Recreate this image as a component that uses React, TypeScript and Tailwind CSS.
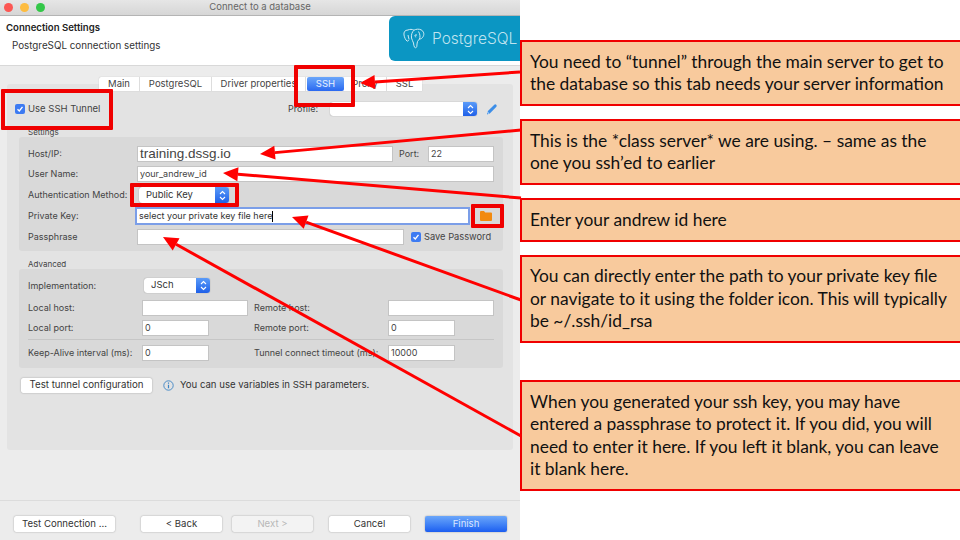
import { ReactNode } from 'react';

const ui = "font-['Inter','Liberation_Sans',sans-serif]";

function Stepper() {
    return (
        <span className="flex h-full w-[14px] items-center justify-center rounded-r-[3px] bg-gradient-to-b from-[#5b9bf8] to-[#1f5fe8]">
            <svg width="7" height="11" viewBox="0 0 7 11" fill="none" stroke="#fff" strokeWidth="1.1">
                <path d="M1 4l2.5-2.5L6 4M1 7l2.5 2.5L6 7" />
            </svg>
        </span>
    );
}

function Select({ value, className }: { value?: string; className: string }) {
    return (
        <div className={`flex items-center justify-between rounded-[3px] bg-white shadow-[0_0_1px_#777] ${className}`}>
            <span className="pl-[7px] text-[9.5px] text-[#333]">{value}</span>
            <Stepper />
        </div>
    );
}

function Input({ value, className }: { value?: string; className: string }) {
    return (
        <div className={`flex items-center border border-[#c4c4c4] bg-white px-[2px] text-[9px] text-[#444] ${className}`}>
            {value}
        </div>
    );
}

function Check() {
    return (
        <span className="flex h-[10px] w-[10px] items-center justify-center rounded-[2px] bg-[#3d7bf2]">
            <svg width="8" height="8" viewBox="0 0 8 8" fill="none" stroke="#fff" strokeWidth="1.3">
                <path d="M1.5 4.2L3.3 6l3.2-4.2" />
            </svg>
        </span>
    );
}

function Row({ label, children, className = '' }: { label: string; children: ReactNode; className?: string }) {
    return (
        <div className={`flex items-center ${className}`}>
            <span className="w-[109px] shrink-0 text-[9px] text-[#444]">{label}</span>
            {children}
        </div>
    );
}

function AdvRow({ label, right, left, rightClass, leftClass, className = '' }: {
    label: string; right: string; left?: string; rightClass: string; leftClass: string; className?: string;
}) {
    return (
        <div className={`flex h-[16px] items-center ${className}`}>
            <span className="w-[114px] shrink-0 whitespace-nowrap text-[9px] text-[#444]">{label}</span>
            <div className="w-[112px] shrink-0">
                <Input value={left} className={`h-[16px] ${leftClass}`} />
            </div>
            <span className="w-[134px] shrink-0 whitespace-nowrap text-[9px] text-[#444]">{right}</span>
            <Input value={right.startsWith('Tunnel') ? '10000' : right === 'Remote port:' ? '0' : undefined} className={`h-[16px] ${rightClass}`} />
        </div>
    );
}

function FooterButton({ label, className }: { label: string; className: string }) {
    return (
        <div className={`flex h-[16px] items-center justify-center rounded-[2px] text-[9.6px] shadow-[0_0_1.5px_#888] ${className}`}>
            {label}
        </div>
    );
}

function Arrow({ x1, y1, x2, y2 }: { x1: number; y1: number; x2: number; y2: number }) {
    const len = Math.hypot(x2 - x1, y2 - y1);
    const ux = (x2 - x1) / len;
    const uy = (y2 - y1) / len;
    const bx = x2 - ux * 15;
    const by = y2 - uy * 15;
    const pts = `${x2},${y2} ${bx - uy * 7},${by + ux * 7} ${bx + uy * 7},${by - ux * 7}`;
    return (
        <g>
            <line x1={x1} y1={y1} x2={bx} y2={by} stroke="#ff0000" strokeWidth="3" />
            <polygon points={pts} fill="#ff0000" />
        </g>
    );
}

function Callout({ className, children }: { className: string; children: ReactNode }) {
    return (
        <div className={`absolute left-[520px] flex w-[442px] items-center border-2 border-[#f00000] bg-[#f8ca9d] pl-[8px] font-['Lato',sans-serif] text-[17.4px] leading-[22.4px] text-[#111] ${className}`}>
            <p className="whitespace-pre-line">{children}</p>
        </div>
    );
}

const tabs = [
    ['Main', 'w-[41px]'],
    ['PostgreSQL', 'w-[72px]'],
    ['Driver properties', 'w-[94px]'],
];

export default function App() {
    return (
        <div className={`relative h-[540px] w-[960px] overflow-hidden bg-white ${ui}`}>
            <div className="flex h-full w-[520px] flex-col bg-[#ececec]">
                <div className="relative flex h-[16px] shrink-0 items-center justify-center border-b border-[#b4b4b4] bg-gradient-to-b from-[#e6e6e6] to-[#d6d6d6] text-[9.5px] text-[#666]">
                    <div className="absolute left-[4px] flex gap-[7px]">
                        <span className="h-[9px] w-[9px] rounded-full bg-[#fc5753]" />
                        <span className="h-[9px] w-[9px] rounded-full bg-[#fdbc40]" />
                        <span className="h-[9px] w-[9px] rounded-full bg-[#33c748]" />
                    </div>
                    Connect to a database
                </div>

                <div className="flex h-[50px] shrink-0 justify-between border-b border-[#d8d8d8] bg-white">
                    <div className="pl-[6px] pt-[5px]">
                        <div className="text-[9.6px] font-semibold text-[#222]">Connection Settings</div>
                        <div className="mt-[4px] pl-[6px] text-[9.8px] text-[#333]">PostgreSQL connection settings</div>
                    </div>
                    <div className="flex h-[45px] w-[131px] items-center gap-[6px] overflow-hidden rounded-l-[6px] bg-[#0b96c3] pl-[13px] text-[#bfe3ef]">
                        <svg width="24" height="24" viewBox="0 0 24 24" fill="none" stroke="#cfeaf3" strokeWidth="1" className="shrink-0">
                            <path d="M6 3C3 3 1.5 5 2 8c.4 2.4 1.6 5 3 6 1 .6 1.6-.6 2-1.5M6 3c2-1 4-.8 6 .2 2-1.2 5-1.4 7-.4 3 1.6 3.4 4.4 2.2 6.7-.8 1.5-2.2 2.6-3.7 2.5" />
                            <path d="M12 3.2C10 5 9 8 9.5 11c.3 2 1.5 3 2 5 .3 1.5.2 3 1 4.2.8 1 2 .6 2.3-.7.3-1.5 0-3.5.7-5 .6-1.2 1.5-1.6 2-2.5 1-2 .4-5.5-1-7.5" />
                            <path d="M6 8c.2 1.4.6 2.6 1 4M13 8h2M13 8c-.3 1.2.3 2 1.2 2" />
                        </svg>
                        <span className="whitespace-nowrap text-[15.5px] font-light">PostgreSQL</span>
                    </div>
                </div>

                <div className="flex-1 px-[7px] pt-[18px]">
                    <div className="h-[366px] rounded-[3px] bg-[#e3e3e3]">
                        <div className="relative z-0 ml-[92px] flex h-[14px] w-[323px] -translate-y-[7px] rounded-t-[2px] bg-white text-[9.5px] text-[#444] shadow-[0_0_1px_#aaa]">
                            {tabs.map(([label, width]) => (
                                <div key={label} className={`flex items-center justify-center border-r border-[#ddd] ${width}`}>
                                    {label}
                                </div>
                            ))}
                            <div className="ml-[1px] flex w-[37px] items-center justify-center rounded-[2px] bg-gradient-to-b from-[#6ba6fa] to-[#2a68f0] text-[#e8f0ff]">SSH</div>
                            <div className="flex w-[43px] items-center justify-center border-r border-[#ddd]">Proxy</div>
                            <div className="flex w-[35px] items-center justify-center">SSL</div>
                        </div>

                        <div className="mt-[4px] flex h-[14px] items-center pl-[8px] pr-[14px]">
                            <Check />
                            <span className="ml-[3px] text-[9.5px] text-[#444]">Use SSH Tunnel</span>
                            <span className="ml-auto text-[9px] text-[#444]">Profile:</span>
                            <Select className="ml-[12px] h-[14px] w-[147px]" />
                            <svg width="14" height="14" viewBox="0 0 14 14" className="ml-[8px]">
                                <path d="M2 12.5l.7-3.2 6.6-6.6a1.5 1.5 0 012.1 2.1l-6.6 6.6z" fill="#3c8ee8" />
                                <path d="M2.4 10l1.7 1.7" stroke="#fff" strokeWidth="0.8" />
                            </svg>
                        </div>

                        <div className="mt-[11px] flex h-[10px] items-center pl-[21px] text-[8px] text-[#444]">Settings</div>
                        <div className="ml-[12px] mr-[10px] flex h-[114px] flex-col rounded-[3px] bg-[#d9d9d9] pl-[9px] pr-[9px] pt-[9px]">
                            <Row label="Host/IP:" className="h-[16px]">
                                <Input value="training.dssg.io" className="h-[16px] w-[256px] font-['Liberation_Sans',sans-serif] text-[13.5px] text-[#111]" />
                                <span className="ml-[6px] w-[29px] text-[9px] text-[#444]">Port:</span>
                                <Input value="22" className="h-[16px] flex-1" />
                            </Row>
                            <Row label="User Name:" className="mt-[4px] h-[16px]">
                                <Input value="your_andrew_id" className="h-[16px] flex-1 text-[8.7px]" />
                            </Row>
                            <Row label="Authentication Method:" className="mt-[5px] h-[16px] whitespace-nowrap">
                                <Select value="Public Key" className="ml-[2px] h-[16px] w-[90px]" />
                            </Row>
                            <Row label="Private Key:" className="mt-[4px] h-[18px]">
                                <div className="-ml-[2px] flex h-[18px] w-[335px] shrink-0 items-center border-2 border-[#7b9ee8] bg-white px-[2px] text-[9px] text-[#333]">
                                    select your private key file here
                                    <span className="h-[11px] w-px bg-black" />
                                </div>
                                <div className="ml-[5px] flex h-[18px] w-[22px] shrink-0 items-center justify-center">
                                    <svg width="12" height="10" viewBox="0 0 12 10" fill="#f28a0f">
                                        <path d="M0 1a1 1 0 011-1h3l1.2 1.4H11a1 1 0 011 1V9a1 1 0 01-1 1H1a1 1 0 01-1-1z" />
                                    </svg>
                                </div>
                            </Row>
                            <Row label="Passphrase" className="mt-[4px] h-[16px]">
                                <Input className="h-[16px] w-[267px]" />
                                <span className="ml-[7px]"><Check /></span>
                                <span className="ml-[3px] whitespace-nowrap text-[9.3px] text-[#444]">Save Password</span>
                            </Row>
                        </div>

                        <div className="mt-[8px] flex h-[10px] items-center pl-[21px] text-[8px] text-[#444]">Advanced</div>
                        <div className="ml-[12px] mr-[10px] flex h-[99px] flex-col rounded-[3px] bg-[#d9d9d9] pl-[9px] pr-[9px] pt-[9px]">
                            <div className="flex h-[15px] items-center">
                                <span className="w-[116px] shrink-0 text-[9px] text-[#444]">Implementation:</span>
                                <Select value="JSch" className="h-[15px] w-[66px]" />
                            </div>
                            <AdvRow label="Local host:" right="Remote host:" leftClass="w-[106px]" rightClass="w-[106px]" className="mt-[7px]" />
                            <AdvRow label="Local port:" left="0" right="Remote port:" leftClass="w-[67px]" rightClass="w-[67px]" className="mt-[4px]" />
                            <div className="mt-[3px] h-px bg-[#c6c6c6]" />
                            <AdvRow label="Keep-Alive interval (ms):" left="0" right="Tunnel connect timeout (ms):" leftClass="w-[67px]" rightClass="w-[67px]" className="mt-[5px]" />
                        </div>

                        <div className="mt-[10px] flex h-[15px] items-center pl-[14px]">
                            <div className="flex h-[15px] w-[131px] items-center justify-center rounded-[2px] bg-white text-[9.7px] text-[#333] shadow-[0_0_1.5px_#888]">Test tunnel configuration</div>
                            <svg width="11" height="11" viewBox="0 0 11 11" className="ml-[11px]" fill="none">
                                <circle cx="5.5" cy="5.5" r="4.7" stroke="#3c83c4" strokeWidth="0.9" />
                                <path d="M5.5 4.7v3.6M5.5 2.6v1.1" stroke="#3c83c4" strokeWidth="1.2" />
                            </svg>
                            <span className="ml-[6px] text-[9.6px] text-[#333]">You can use variables in SSH parameters.</span>
                        </div>
                    </div>
                </div>

                <div className="flex h-[40px] shrink-0 items-start border-t border-[#dcdcdc] pl-[14px] pt-[15px]">
                    <FooterButton label="Test Connection ..." className="w-[101px] bg-white text-[#333]" />
                    <FooterButton label="< Back" className="ml-[26px] w-[81px] bg-white text-[#333]" />
                    <FooterButton label="Next >" className="ml-[10px] w-[81px] bg-[#f3f3f3] text-[#b8b8b8]" />
                    <FooterButton label="Cancel" className="ml-[16px] w-[81px] bg-white text-[#333]" />
                    <FooterButton label="Finish" className="ml-[15px] w-[82px] bg-gradient-to-b from-[#6ba6fa] to-[#1c5df0] text-[#dbe7ff]" />
                </div>
            </div>

            <Callout className="top-[40px] h-[66px]">{'You need to “tunnel” through the main server to get to\nthe database so this tab needs your server information'}</Callout>
            <Callout className="top-[119px] h-[66px]">{'This is the *class server* we are using. – same as the\none you ssh’ed to earlier'}</Callout>
            <Callout className="top-[198px] h-[44px]">Enter your andrew id here</Callout>
            <Callout className="top-[255px] h-[88px]">{'You can directly enter the path to your private key file\nor navigate to it using the folder icon. This will typically\nbe ~/.ssh/id_rsa'}</Callout>
            <Callout className="top-[380px] h-[111px]">{'When you generated your ssh key, you may have\nentered a passphrase to protect it. If you did, you will\nneed to enter it here. If you left it blank, you can leave\nit blank here.'}</Callout>

            {/* red annotations on top of the window */}
            <div className="absolute left-[294px] top-[65px] h-[42px] w-[61px] rounded-[1px] border-[4px] border-[#f00000]" />
            <div className="absolute left-[1px] top-[89px] h-[41px] w-[112px] rounded-[1px] border-[4px] border-[#f00000]" />
            <div className="absolute left-[130px] top-[183px] h-[24px] w-[109px] rounded-[1px] border-[4px] border-[#f00000]" />
            <div className="absolute left-[471px] top-[204px] h-[24px] w-[33px] rounded-[1px] border-[4px] border-[#f00000]" />
            <svg width="960" height="540" className="pointer-events-none absolute left-0 top-0">
                <Arrow x1={520} y1={72} x2={360} y2={83} />
                <Arrow x1={521} y1={130} x2={260} y2={154} />
                <Arrow x1={521} y1={198} x2={223} y2={173} />
                <Arrow x1={521} y1={300} x2={292} y2={217} />
                <Arrow x1={521} y1={436} x2={163} y2={237} />
            </svg>
        </div>
    );
}
